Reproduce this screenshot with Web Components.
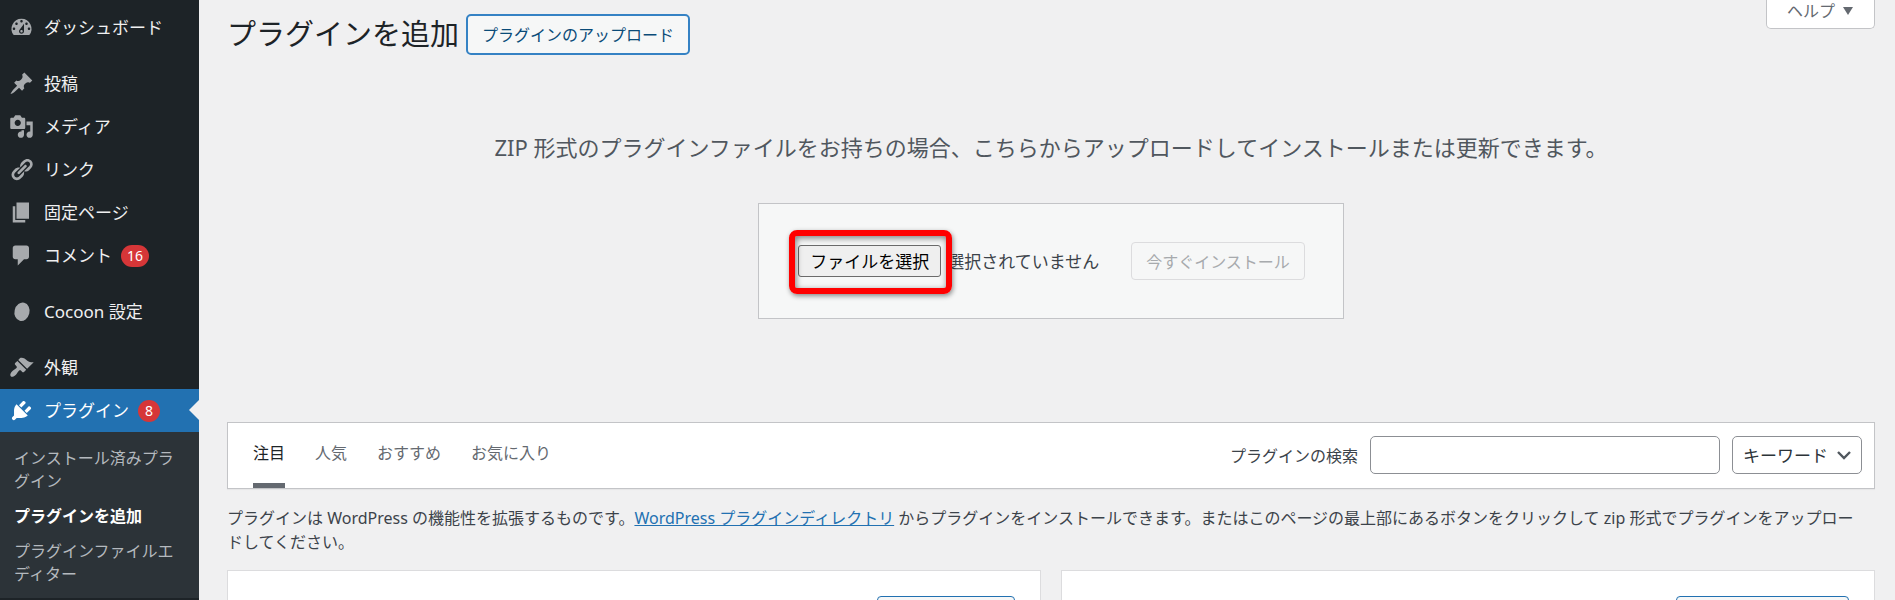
<!DOCTYPE html>
<html lang="ja">
<head>
<meta charset="utf-8">
<meta name="viewport" content="width=device-width, initial-scale=1">
<title>プラグインを追加</title>
<style>
  :root {
    --color-menu: #1d2327;
    --color-submenu: #2c3338;
    --color-accent: #2271b1;
    --color-surface: #f0f0f1;
    --color-text: #3c434a;
    --color-muted: #646970;
    --color-border: #c3c4c7;
    --color-border-light: #dcdcde;
    --color-alert: #d63638;
  }

  body {
    margin: 0;
    background: var(--color-surface);
    color: var(--color-text);
    font: 16px/24px "Noto Sans CJK JP", sans-serif;
  }
</style>
</head>
<body>
<admin-shell>
  <admin-menu slot="menu">
    <menu-item icon="dashboard">ダッシュボード</menu-item>
    <menu-separator></menu-separator>
    <menu-item icon="post">投稿</menu-item>
    <menu-item icon="media">メディア</menu-item>
    <menu-item icon="link">リンク</menu-item>
    <menu-item icon="page">固定ページ</menu-item>
    <menu-item icon="comment" count="16">コメント</menu-item>
    <menu-separator></menu-separator>
    <menu-item icon="cocoon">Cocoon 設定</menu-item>
    <menu-separator></menu-separator>
    <menu-item icon="appearance">外観</menu-item>
    <menu-item icon="plugin" count="8" current>プラグイン</menu-item>
    <sub-menu>
      <sub-item>インストール済みプラグイン</sub-item>
      <sub-item current>プラグインを追加</sub-item>
      <sub-item>プラグインファイルエディター</sub-item>
    </sub-menu>
  </admin-menu>

  <page-header heading="プラグインを追加" action="プラグインのアップロード"></page-header>
  <upload-panel>ZIP 形式のプラグインファイルをお持ちの場合、こちらからアップロードしてインストールまたは更新できます。</upload-panel>
  <filter-bar></filter-bar>
  <plugin-intro></plugin-intro>
  <card-grid>
    <plugin-card size="small"></plugin-card>
    <plugin-card></plugin-card>
  </card-grid>
</admin-shell>

<script>
/* Ícones do menu, numa grade de 20x20 */
const ICONS = {
  dashboard: '<path fill-rule="evenodd" d="M3.76 16h12.48A7.998 7.998 0 0 0 10 3a7.998 7.998 0 0 0-6.24 13zM10 4c.55 0 1 .45 1 1s-.45 1-1 1-1-.45-1-1 .45-1 1-1zM6 6c.55 0 1 .45 1 1s-.45 1-1 1-1-.45-1-1 .45-1 1-1zm8 0c.55 0 1 .45 1 1s-.45 1-1 1-1-.45-1-1 .45-1 1-1zm-5.37 5.55L12 7v6c0 1.1-.9 2-2 2s-2-.9-2-2c0-.57.24-1.08.63-1.45zM4 10c.55 0 1 .45 1 1s-.45 1-1 1-1-.45-1-1 .45-1 1-1zm12 0c.55 0 1 .45 1 1s-.45 1-1 1-1-.45-1-1 .45-1 1-1zm-5 3c0-.55-.45-1-1-1s-1 .45-1 1 .45 1 1 1 1-.45 1-1z"/>',
  post: '<path d="M10.44 3.02l1.82-1.82 6.36 6.35-1.83 1.82c-1.05-.68-2.48-.57-3.41.36l-.75.75c-.92.93-1.04 2.35-.35 3.41l-1.83 1.82-2.41-2.41-2.8 2.79c-.42.42-3.38 2.71-3.8 2.29s1.86-3.39 2.28-3.81l2.79-2.79L4.1 9.36l1.83-1.82c1.05.69 2.48.57 3.4-.36l.75-.75c.93-.92 1.05-2.35.36-3.41z"/>',
  media: '<path fill-rule="evenodd" d="M13 11V4c0-.55-.45-1-1-1h-1.67L9 1H5L3.67 3H2c-.55 0-1 .45-1 1v7c0 .55.45 1 1 1h10c.55 0 1-.45 1-1zM7 4.5c1.38 0 2.5 1.12 2.5 2.5S8.38 9.5 7 9.5 4.5 8.38 4.5 7 5.62 4.5 7 4.5zM14 6h5v10.5c0 1.38-1.12 2.5-2.5 2.5S14 17.88 14 16.5s1.12-2.5 2.5-2.5c.17 0 .34.02.5.05V9h-3V6zm-4 8.05V13h2v3.5c0 1.38-1.12 2.5-2.5 2.5S7 17.88 7 16.5 8.12 14 9.5 14c.17 0 .34.02.5.05z"/>',
  link: '<path d="M17.74 2.76c1.68 1.69 1.68 4.41 0 6.1l-1.53 1.52c-1.12 1.12-2.7 1.47-4.14 1.09l2.62-2.61.76-.77.76-.76c.84-.84.84-2.2 0-3.04-.84-.85-2.2-.85-3.04 0l-.77.76-3.38 3.38c-.37-1.44-.02-3.02 1.1-4.14l1.52-1.53c1.69-1.68 4.42-1.68 6.1 0zM8.59 13.43l5.34-5.34c.42-.42.42-1.1 0-1.52-.44-.43-1.13-.39-1.53 0l-5.33 5.34c-.42.42-.42 1.1 0 1.52.44.43 1.13.39 1.52 0zm-.76 2.29l4.14-4.15c.38 1.44.03 3.02-1.09 4.14l-1.52 1.53c-1.69 1.68-4.41 1.68-6.1 0-1.68-1.68-1.68-4.42 0-6.1l1.53-1.52c1.12-1.12 2.7-1.47 4.14-1.1l-4.14 4.15c-.85.84-.85 2.2 0 3.05.84.84 2.2.84 3.04 0z"/>',
  page: '<path d="M6 15V2h10v13H6zm-1 1h8v2H3V5h2v11z"/>',
  comment: '<path d="M5 2h9c1.1 0 2 .9 2 2v7c0 1.1-.9 2-2 2h-2l-5 5v-5H5c-1.1 0-2-.9-2-2V4c0-1.1.9-2 2-2z"/>',
  cocoon: '<ellipse cx="10.4" cy="10.2" rx="6" ry="7.4" transform="rotate(14 10.4 10.2)"/>',
  appearance: '<path d="M14.48 11.06L7.41 3.99l1.5-1.5c.5-.56 2.3-.47 3.51.32 1.21.8 1.43 1.28 2.91 2.1 1.18.64 2.45 1.26 4.45.85zm-.71.71L6.7 4.7 4.93 6.47c-.39.39-.39 1.02 0 1.41l1.06 1.06c.39.39.39 1.03 0 1.42-.6.6-1.43 1.11-2.21 1.69-.35.26-.7.53-1.01.84C1.43 14.23.4 16.08 1.4 17.07c.99 1 2.84-.03 4.18-1.36.31-.31.58-.66.85-1.02.57-.78 1.08-1.61 1.69-2.21.39-.39 1.02-.39 1.41 0l1.06 1.06c.39.39 1.02.39 1.41 0z"/>',
  plugin: '<path d="M13.11 4.36L9.87 7.6 8 5.73l3.24-3.24c.35-.34 1.05-.2 1.56.32.52.51.66 1.21.31 1.55zm-8 1.77l.91-1.12 9.01 9.01-1.19.84c-.71.71-2.63 1.16-3.82 1.16H6.14L4.9 17.26c-.59.59-1.54.59-2.12 0-.59-.58-.59-1.53 0-2.12l1.24-1.24v-3.88c0-1.13.4-3.19 1.09-3.89zm7.26 3.97l3.24-3.24c.34-.35 1.04-.21 1.55.31.52.51.66 1.21.31 1.55l-3.24 3.25z"/>'
};

/* Base comum: monta o shadow root a partir de render() */
class AdminElement extends HTMLElement {
  connectedCallback() {
    if (this.shadowRoot) return;
    this.attachShadow({ mode: 'open' });
    this.shadowRoot.innerHTML = `<style>* { box-sizing: border-box; }</style>${this.render()}`;
    this.ready();
  }

  render() { return '<slot></slot>'; }

  ready() {}
}

/* O menu e o conteúdo dividem a altura da janela */
class AdminShell extends AdminElement {
  render() {
    return `
      <style>
        :host {
          display: grid;
          grid-template-columns: 199px minmax(0, 1fr);
          height: 100vh;
          overflow: hidden;
        }
        main { padding: 0 20px 0 28px; }
      </style>
      <slot name="menu"></slot>
      <main><slot></slot></main>
    `;
  }
}

class AdminMenu extends AdminElement {
  render() {
    return `
      <style>
        :host { display: block; background: var(--color-menu); }
        nav { padding-top: 6px; }
      </style>
      <nav aria-label="メインメニュー"><slot></slot></nav>
    `;
  }
}

class MenuItem extends AdminElement {
  render() {
    const count = this.getAttribute('count');
    return `
      <style>
        :host { display: block; position: relative; }
        a {
          display: flex;
          align-items: center;
          height: 43px;
          padding-left: 9px;
          color: #f0f0f1;
          font-family: "Noto Sans", "Noto Sans CJK JP", sans-serif;
          font-size: 17px;
          text-decoration: none;
        }
        svg {
          width: 25px;
          height: 25px;
          margin-right: 10px;
          fill: #a7aaad;
        }
        .badge {
          min-width: 22px;
          height: 22px;
          margin-left: 9px;
          padding: 0 6px;
          border-radius: 11px;
          background: var(--color-alert);
          color: #fff;
          font-size: 14px;
          line-height: 22px;
          text-align: center;
        }
        :host([current]) a { background: var(--color-accent); color: #fff; }
        :host([current]) svg { fill: #fff; }
        /* seta que aponta para o conteúdo */
        :host([current])::after {
          content: "";
          position: absolute;
          top: 11px;
          right: 0;
          border: 10px solid transparent;
          border-left-width: 0;
          border-right-color: var(--color-surface);
        }
      </style>
      <a href="#">
        <svg viewBox="0 0 20 20" aria-hidden="true">${ICONS[this.getAttribute('icon')] || ''}</svg>
        <slot></slot>
        ${count ? `<span class="badge">${count}</span>` : ''}
      </a>
    `;
  }
}

class MenuSeparator extends AdminElement {
  render() {
    return '<style>:host { display: block; height: 13px; }</style>';
  }
}

class SubMenu extends AdminElement {
  render() {
    return `
      <style>
        :host { display: block; padding: 8px 0 7px; background: var(--color-submenu); }
      </style>
      <slot></slot>
    `;
  }
}

class SubItem extends AdminElement {
  render() {
    return `
      <style>
        :host { display: block; }
        a {
          display: block;
          padding: 6px 14px;
          color: #b4b9be;
          line-height: 23px;
          text-decoration: none;
        }
        :host([current]) a { color: #fff; font-weight: 700; }
      </style>
      <a href="#"><slot></slot></a>
    `;
  }
}

class PageHeader extends AdminElement {
  render() {
    return `
      <style>
        :host { display: flex; align-items: flex-start; }
        h1 {
          margin: 12px 7px 0 0;
          color: var(--color-menu);
          font-size: 29px;
          font-weight: 400;
          line-height: 40px;
        }
        .action {
          height: 41px;
          margin-top: 14px;
          padding: 0 14px 2px;
          border: 2px solid #3582c4;
          border-radius: 5px;
          background: #f6f7f7;
          color: #0a4b78;
          font: inherit;
        }
        .help {
          display: flex;
          align-items: center;
          gap: 7px;
          height: 29px;
          margin-left: auto;
          padding: 0 20px 8px;
          border: 1px solid var(--color-border);
          border-top: 0;
          border-radius: 0 0 5px 5px;
          background: #fff;
          color: var(--color-muted);
          font: inherit;
          line-height: 20px;
        }
        .help svg { width: 12px; height: 9px; fill: currentColor; }
      </style>
      <h1>${this.getAttribute('heading')}</h1>
      <button class="action" type="button">${this.getAttribute('action')}</button>
      <button class="help" type="button">ヘルプ
        <svg viewBox="0 0 12 9" aria-hidden="true"><path d="M1 1h10L6 9z"/></svg>
      </button>
    `;
  }
}

class UploadPanel extends AdminElement {
  render() {
    return `
      <style>
        :host {
          display: flex;
          flex-direction: column;
          align-items: center;
          padding: 76px 0 103px;
        }
        p {
          margin: 0;
          color: #50575e;
          font-family: "Noto Sans", "Noto Sans CJK JP", sans-serif;
          font-size: 22px;
          line-height: 32px;
        }
        form {
          display: flex;
          align-items: center;
          margin-top: 40px;
          padding: 38px 38px 38px 39px;
          border: 1px solid var(--color-border);
          background: #f6f7f7;
          font-size: 17px;
        }
        .picker { position: relative; margin-right: 6px; }
        .choose {
          display: block;
          width: 143px;
          height: 32px;
          padding: 0;
          border: 1px solid #6b6b6b;
          border-radius: 3px;
          background: #efefef;
          color: #000;
          font: inherit;
        }
        /* moldura vermelha que destaca o botão */
        .picker::after {
          content: "";
          position: absolute;
          inset: -15px -11px -17px -9px;
          border: 6px solid #f00;
          border-radius: 8px;
          box-shadow: 1px 2px 5px rgba(0,0,0,.45), inset 1px 2px 6px rgba(0,0,0,.5);
          pointer-events: none;
        }
        .install {
          height: 38px;
          margin-left: 32px;
          padding: 0 14px;
          border: 1px solid var(--color-border-light);
          border-radius: 4px;
          background: #f6f7f7;
          color: #a7aaad;
          font: inherit;
          font-size: 16px;
        }
      </style>
      <p><slot></slot></p>
      <form>
        <div class="picker">
          <button class="choose" type="button">ファイルを選択</button>
        </div>
        <span>選択されていません</span>
        <input type="file" accept=".zip" aria-label="プラグインの zip ファイル" hidden>
        <button class="install" type="submit" disabled>今すぐインストール</button>
      </form>
    `;
  }

  ready() {
    const root = this.shadowRoot;
    const file = root.querySelector('input');
    root.querySelector('.choose').addEventListener('click', () => file.click());
    file.addEventListener('change', () => {
      if (!file.files.length) return;
      root.querySelector('span').textContent = file.files[0].name;
      root.querySelector('.install').disabled = false;
    });
  }
}

class FilterBar extends AdminElement {
  render() {
    return `
      <style>
        :host {
          display: flex;
          justify-content: space-between;
          align-items: flex-start;
          height: 67px;
          padding: 0 12px 0 25px;
          border: 1px solid var(--color-border);
          background: #fff;
          box-shadow: 0 1px 1px rgba(0,0,0,.04);
          box-sizing: border-box;
        }
        nav { display: flex; gap: 30px; }
        nav a {
          height: 65px;
          padding-top: 17px;
          border-bottom: 5px solid transparent;
          color: var(--color-muted);
          text-decoration: none;
        }
        nav a.current { border-color: var(--color-muted); color: var(--color-menu); }
        form { display: flex; align-items: center; margin-top: 13px; }
        label { margin-right: 12px; }
        input, select {
          height: 38px;
          border: 1px solid #8c8f94;
          border-radius: 5px;
          background: #fff;
          color: #2c3338;
          font: inherit;
          font-size: 17px;
        }
        input { width: 350px; padding: 0 10px; }
        .scope { position: relative; margin-left: 12px; }
        select {
          display: block;
          width: 130px;
          padding: 0 30px 0 10px;
          appearance: none;
        }
        .scope svg {
          position: absolute;
          top: 15px;
          right: 11px;
          width: 14px;
          height: 9px;
          fill: none;
          stroke: #50575e;
          stroke-width: 2.4;
          pointer-events: none;
        }
      </style>
      <nav aria-label="フィルター">
        <a href="#" class="current">注目</a>
        <a href="#">人気</a>
        <a href="#">おすすめ</a>
        <a href="#">お気に入り</a>
      </nav>
      <form>
        <label for="search">プラグインの検索</label>
        <input id="search" type="search">
        <div class="scope">
          <select aria-label="検索の対象"><option>キーワード</option></select>
          <svg viewBox="0 0 14 9" aria-hidden="true"><path d="M1 1l6 6 6-6"/></svg>
        </div>
      </form>
    `;
  }
}

class PluginIntro extends AdminElement {
  render() {
    return `
      <style>
        :host { display: block; margin: 17px 0 16px; }
        p {
          margin: 0;
          padding-right: 8px;
          font-family: "Noto Sans", "Noto Sans CJK JP", sans-serif;
        }
        a { color: var(--color-accent); }
      </style>
      <p>プラグインは WordPress の機能性を拡張するものです。<a href="#">WordPress プラグインディレクトリ</a> からプラグインをインストールできます。またはこのページの最上部にあるボタンをクリックして zip 形式でプラグインをアップロードしてください。</p>
    `;
  }
}

class CardGrid extends AdminElement {
  render() {
    return `
      <style>
        :host { display: grid; grid-template-columns: 1fr 1fr; gap: 20px; }
      </style>
      <slot></slot>
    `;
  }
}

class PluginCard extends AdminElement {
  render() {
    return `
      <style>
        :host {
          display: flex;
          justify-content: flex-end;
          min-height: 200px;
          padding: 25px;
          border: 1px solid var(--color-border-light);
          background: #fff;
          box-sizing: border-box;
        }
        button {
          width: 173px;
          height: 38px;
          border: 1px solid var(--color-accent);
          border-radius: 4px;
          background: #f6f7f7;
        }
        :host([size="small"]) button { width: 138px; }
      </style>
      <button type="button" aria-label="今すぐインストール"></button>
    `;
  }
}

customElements.define('admin-shell', AdminShell);
customElements.define('admin-menu', AdminMenu);
customElements.define('menu-item', MenuItem);
customElements.define('menu-separator', MenuSeparator);
customElements.define('sub-menu', SubMenu);
customElements.define('sub-item', SubItem);
customElements.define('page-header', PageHeader);
customElements.define('upload-panel', UploadPanel);
customElements.define('filter-bar', FilterBar);
customElements.define('plugin-intro', PluginIntro);
customElements.define('card-grid', CardGrid);
customElements.define('plugin-card', PluginCard);
</script>
</body>
</html>
